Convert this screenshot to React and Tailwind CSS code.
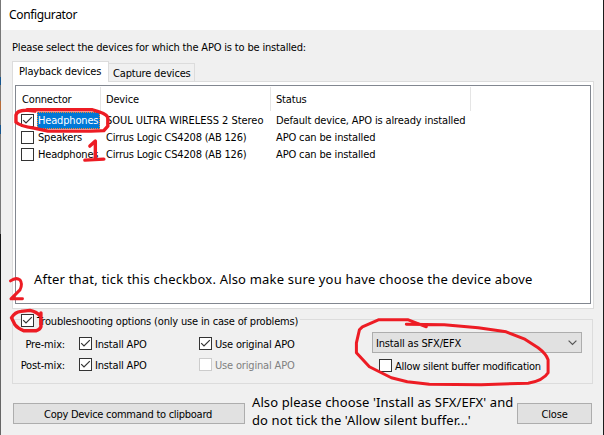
import React from "react";

function Check({ checked, disabled, className = "" }) {
  return (
    <span
      className={`block h-[13px] w-[13px] shrink-0 border bg-white ${
        disabled ? "border-[#cccccc]" : "border-[#333333]"
      } ${className}`}
    >
      {checked && (
        <svg viewBox="0 0 11 11" className="block h-[11px] w-[11px]">
          <path d="M1.2 5.2 4 8 9.8 2.2" fill="none" stroke="#333" strokeWidth="1.2" />
        </svg>
      )}
    </span>
  );
}

const rows = [
  ["Headphones", "SOUL ULTRA WIRELESS 2 Stereo", "Default device, APO is already installed", true],
  ["Speakers", "Cirrus Logic CS4208 (AB 126)", "APO can be installed", false],
  ["Headphones", "Cirrus Logic CS4208 (AB 126)", "APO can be installed", false],
];

function DeviceTable() {
  return (
    <div className="h-[219px] border border-[#828790] bg-white pt-px">
      <div className="flex h-6 leading-[26px]">
        <span className="w-[85px] border-r border-[#e5e5e5] pl-[6px]">Connector</span>
        <span className="w-[170px] border-r border-[#e5e5e5] pl-[5px]">Device</span>
        <span className="w-[200px] border-r border-[#e5e5e5] pl-[5px]">Status</span>
      </div>
      <div className="pt-px">
        {rows.map(([name, device, status, on], i) => (
          <div key={i} className="flex h-[17px] items-center leading-[17px]">
            <Check checked={on} className="ml-[5px]" />
            <span
              className={`ml-[3px] h-[17px] w-[63px] pl-px ${
                on ? "bg-[#0078d7] text-white outline-1 -outline-offset-1 outline-dotted outline-[#ff8728]" : ""
              }`}
            >
              {name}
            </span>
            <span className={`w-[171px] pl-[6px] ${on ? "tracking-[-0.04px]" : "tracking-[-0.2px]"}`}>{device}</span>
            <span className="pl-[5px] tracking-[-0.14px]">{status}</span>
          </div>
        ))}
      </div>
      <p className="mt-[105px] pl-[18px] font-['Noto_Sans',sans-serif] text-[13px] leading-[22px] tracking-[0.19px]">
        After that, tick this checkbox. Also make sure you have choose the device above
      </p>
    </div>
  );
}

function MixRow({ label, disabled }) {
  return (
    <div className="flex h-[21px] items-center">
      <span className="w-[52px] pt-px text-right">{label}</span>
      <Check checked className="ml-[14px]" />
      <span className="ml-[3px] w-[104px] pt-px">Install APO</span>
      <Check checked={!disabled} disabled={disabled} />
      <span className={`ml-[3px] pt-px ${disabled ? "text-[#808080]" : ""}`}>Use original APO</span>
    </div>
  );
}

function Options() {
  return (
    <div className="mt-[5px] h-[70px]">
      <div className="flex h-[13px] items-center">
        <span className="h-[13px] w-[9px] shrink-0 pt-[5px]">
          <span className="block h-[8px] border-t border-l border-[#dcdcdc]" />
        </span>
        <Check checked />
        <span className="ml-[3px] shrink-0 pt-[2px] pr-[2px]">Troubleshooting options (only use in case of problems)</span>
        <span className="h-[13px] grow pt-[5px]">
          <span className="block h-[8px] border-t border-r border-[#dcdcdc]" />
        </span>
      </div>
      <div className="flex h-[57px] border border-t-0 border-[#dcdcdc]">
        <div className="w-[359px] pt-[6px]">
          <MixRow label="Pre-mix:" />
          <MixRow label="Post-mix:" disabled />
        </div>
        <div className="w-[210px] pt-[5px]">
          <div className="flex h-[21px] items-center justify-between border border-[#adadad] bg-[#e1e1e1] pr-[4px] pl-[3px]">
            <span className="pt-px">Install as SFX/EFX</span>
            <svg viewBox="0 0 9 6" className="h-[6px] w-[9px]">
              <path d="M.6.6 4.5 4.5 8.4.6" fill="none" stroke="#555" strokeWidth="1.2" />
            </svg>
          </div>
          <div className="mt-[6px] flex h-[13px] items-center pl-[7px]">
            <Check />
            <span className="ml-[3px] pt-[2px] tracking-[-0.25px]">Allow silent buffer modification</span>
          </div>
        </div>
      </div>
    </div>
  );
}

function Marks() {
  return (
    <svg
      viewBox="0 0 604 435"
      className="pointer-events-none absolute inset-0 h-full w-full"
      fill="none"
      stroke="#ed1c24"
      strokeWidth="3.4"
      strokeLinecap="round"
      strokeLinejoin="round"
    >
      <path d="M35 111 26 110Q17 110 16 115L16 122Q20 126 34 128L48 131 91 131 104 130.5 108 126 108 117Q106 113 92 109.5L50 109.5 27 109.5" />
      <path d="M90 146 95.5 141 95.5 159M85 160 104 159" />
      <path d="M10.5 281Q16 277 20 280Q23 284 20 290L11 299 22.5 299" strokeWidth="3" />
      <path d="M41 313 41 327Q40 330 36 331L24 331Q18 329 15 325L11.5 318Q15 312 21 311.5L30 310.5Q37 312 40 316" />
      <path d="M427 327 409 320 379 320 363 327 360 330 357 343 357 353 370 367 392 378 408 382 430 384.5 482 385 529 383.5Q544 381 549 373L549 360Q547 354 539 348L525 339 507 332 479 328 445 325 407 324.5" strokeWidth="3" />
    </svg>
  );
}

export default function App() {
  return (
    <div className="relative h-[435px] w-[604px] overflow-hidden border-r border-[#1c1c1c] bg-[#f0f0f0] font-['DejaVu_Sans_Condensed','DejaVu_Sans',sans-serif] text-[11px] leading-[13px] tracking-[-0.17px] whitespace-nowrap text-black [font-stretch:condensed]">
      <div className="flex h-full">
        <div className="w-px shrink-0 bg-[linear-gradient(#777_0_77px,#16558d_77px_85px,#777_85px_101px,#b66b39_101px_110px,#777_110px_125px,#16558d_125px_134px,#777_134px_234px,#171717_234px_340px,#666_340px)]" />
        <div className="w-[602px]">
          <header className="h-[30px] bg-white pl-[8px] font-['Noto_Sans',sans-serif] text-[12px] leading-[29px] tracking-[-0.35px]">
            Configurator
          </header>
          <main className="pt-[11px] pr-[10px] pl-[11px]">
            <p>Please select the devices for which the APO is to be installed:</p>
            <div className="mt-[7px] flex h-[20px] items-end">
              <span className="relative -mb-px h-[21px] w-[97px] border border-b-0 border-[#dcdcdc] bg-white pl-[6px] leading-[19px]">
                Playback devices
              </span>
              <span className="h-[18px] w-[86px] border border-b-0 border-l-0 border-[#dcdcdc] pl-[4px] leading-[19px]">
                Capture devices
              </span>
            </div>
            <div className="h-[228px] w-[582px] border border-[#dcdcdc] bg-white px-[2px] pt-[3px]">
              <DeviceTable />
            </div>
            <Options />
            <footer className="mt-[13px] flex pl-px">
              <button className="mt-[6px] h-[21px] w-[232px] shrink-0 border border-[#adadad] bg-[#e1e1e1] pt-px pr-[2px] tracking-[-0.27px]">
                Copy Device command to clipboard
              </button>
              <p className="-mt-[4px] ml-[7px] w-[265px] shrink-0 font-['Noto_Sans',sans-serif] text-[13px] leading-[18px] tracking-[0.1px]">
                Also please choose 'Install as SFX/EFX' and
                <br />
                do not tick the 'Allow silent buffer...'
              </p>
              <button className="mt-[6px] h-[21px] w-[75px] shrink-0 border border-[#adadad] bg-[#e1e1e1] pt-px">Close</button>
            </footer>
          </main>
        </div>
      </div>
      <Marks />
    </div>
  );
}
